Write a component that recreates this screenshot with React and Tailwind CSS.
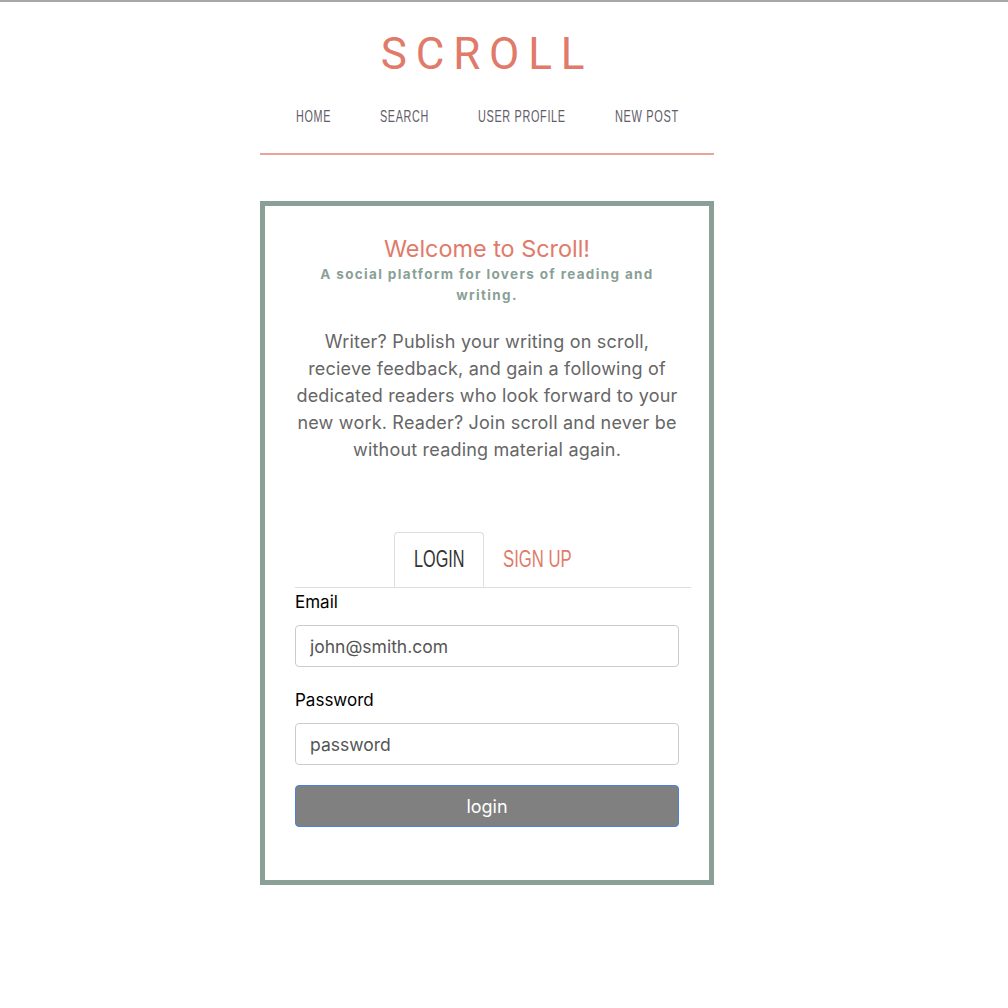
import React from 'react';

const narrow = { fontFamily: '"Liberation Sans", Arial, sans-serif' };

// condensed caps: a fixed-width slot with the glyphs squeezed inside it
function Squeezed({ width, scale, children }) {
  return (
    <span className="inline-block whitespace-nowrap" style={{ width }}>
      <span className={`inline-block origin-left ${scale}`}>{children}</span>
    </span>
  );
}

function App() {
  return (
    <div className="min-h-screen bg-white border-t-2 border-[#a8a8a8]" style={{ fontFamily: 'Inter, "Liberation Sans", sans-serif' }}>
      <div className="w-[454px] ml-[260px]">
        {/* Header */}
        <header className="border-b-2 border-[#e8a598]">
          <h1 className="pt-[26px] text-center text-[44px] leading-[52px] tracking-[0.2em] text-[#e07b6a]" style={{ fontFamily: 'Roboto, "Liberation Sans", sans-serif' }}>
            SCROLL
          </h1>
          <nav className="flex justify-center gap-[49px] pt-[25px] pb-[26px] text-[16.5px] leading-[22px] tracking-[0.06em] text-[#635c68]" style={narrow}>
            <Squeezed width="35px" scale="scale-x-[0.655]">HOME</Squeezed>
            <Squeezed width="49px" scale="scale-x-[0.655]">SEARCH</Squeezed>
            <Squeezed width="88px" scale="scale-x-[0.66]">USER PROFILE</Squeezed>
            <Squeezed width="64px" scale="scale-x-[0.665]">NEW POST</Squeezed>
          </nav>
        </header>

        {/* Card */}
        <div className="mt-[46px] border-[5px] border-[#8a9f96] px-[30px] pt-[28px] pb-[53px]">
          <h2 className="text-center text-[23.4px] leading-[30px] text-[#e07b6a]">Welcome to Scroll!</h2>
          <p className="text-center text-[13.5px] leading-[21px] font-bold tracking-[0.1em] text-[#8a9f96] px-[12px]">
            A social platform for lovers of reading and writing.
          </p>
          <p className="mt-[22px] mx-[-4px] text-center text-[18px] leading-[27px] tracking-[0.2px] text-[#666666]">
            Writer? Publish your writing on scroll, recieve feedback, and gain a following of dedicated readers who look forward to your new work. Reader? Join scroll and never be without reading material again.
          </p>

          {/* Tabs */}
          <div className="mt-[69px] flex pl-[99px] border-b border-[#dddddd] mr-[-12px]" style={narrow}>
            <button className="h-[55px] w-[90px] mb-[-1px] pl-[19px] text-left border border-[#dddddd] border-b-white rounded-t-[4px] bg-white text-[23.5px] text-[#333333]">
              <Squeezed width="50px" scale="scale-x-[0.69]">LOGIN</Squeezed>
            </button>
            <button className="h-[55px] pl-[19px] pr-[19px] text-left text-[23.5px] text-[#e07b6a]">
              <Squeezed width="69px" scale="scale-x-[0.71]">SIGN UP</Squeezed>
            </button>
          </div>

          {/* Form */}
          <form className="w-full">
            <label className="block mt-[3px] text-[17px] leading-[22px] text-black">Email</label>
            <input
              className="mt-[12px] block w-full h-[42px] px-[14px] border border-[#cccccc] rounded-[4px] text-[17.5px] text-[#555555]"
              defaultValue="john@smith.com"
            />
            <label className="block mt-[22px] text-[17px] leading-[22px] text-black">Password</label>
            <input
              className="mt-[12px] block w-full h-[42px] px-[14px] border border-[#cccccc] rounded-[4px] text-[17.5px] text-[#555555]"
              defaultValue="password"
            />
            <button
              type="button"
              className="mt-[20px] block w-full h-[42px] bg-[#808080] border border-[#4a80e0] rounded-[4px] text-[18px] text-white"
            >
              login
            </button>
          </form>
        </div>
      </div>
    </div>
  );
}

export default App;
